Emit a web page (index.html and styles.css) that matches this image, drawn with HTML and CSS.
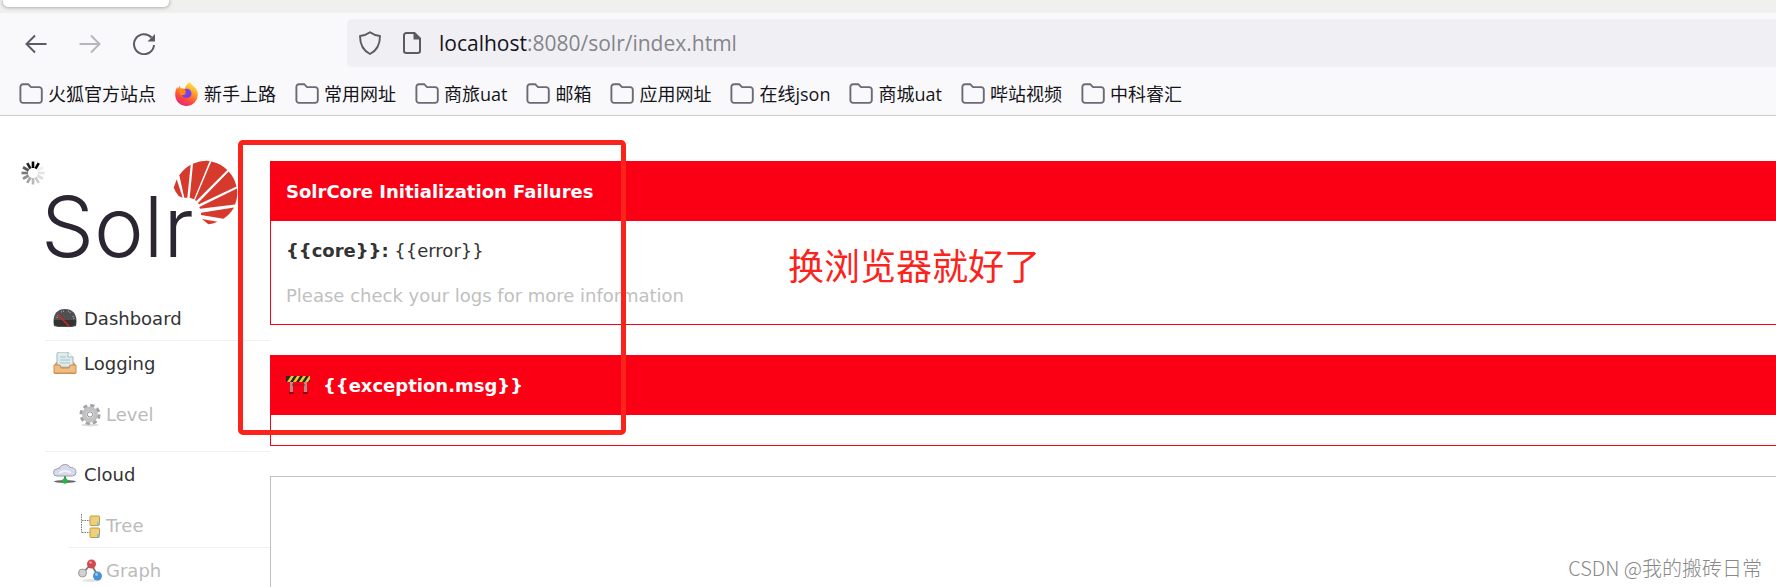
FILE: index.html
```html
<!DOCTYPE html>
<html lang="zh-CN">
<head>
<meta charset="utf-8">
<title>Solr Admin</title>
<link rel="stylesheet" href="styles.css">
</head>
<body>
<svg class="defs" aria-hidden="true">
  <symbol id="folder" viewBox="0 0 24 24"><path d="M4 2.2h5.2l2.8 2.9h8.2a2.6 2.6 0 0 1 2.6 2.6v10.6a2.6 2.6 0 0 1-2.6 2.6H4a2.6 2.6 0 0 1-2.6-2.6V4.8A2.6 2.6 0 0 1 4 2.2z" fill="none" stroke="#6b6a76" stroke-width="1.9"/></symbol>
</svg>
<header class="browser">
  <div class="tabs"><div class="tab"></div></div>
  <div class="toolbar">
    <div class="buttons">
      <button type="button" aria-label="后退"><svg viewBox="0 0 24 24"><path d="M22.5 13H2.500M11 4.500L2.500 13l8.500 8.500" fill="none" stroke="#5b5b66" stroke-width="2"/></svg></button>
      <button type="button" aria-label="前进" disabled><svg viewBox="0 0 24 24"><path d="M1.500 13h20M13 4.500l8.500 8.500-8.500 8.500" fill="none" stroke="#b6b6bd" stroke-width="2"/></svg></button>
      <button type="button" aria-label="刷新"><svg viewBox="0 0 24 24"><path d="M19.500 6.500A10 10 0 1 0 22 14" fill="none" stroke="#5b5b66" stroke-width="2"/><path d="M23 3v7.500h-7.500z" fill="#5b5b66"/></svg></button>
    </div>
    <div class="address">
      <svg viewBox="0 0 24 24"><path d="M12 1.300c3 2.300 6.200 3.300 10 3.700 0 8-3 14.500-10 18-7-3.500-10-10-10-18 3.800-.4 7-1.400 10-3.700z" fill="none" stroke="#5b5b60" stroke-width="1.900" stroke-linejoin="round"/></svg>
      <svg viewBox="0 0 24 24"><path d="M14.500 2H6.300A2.300 2.300 0 0 0 4 4.300v15.400A2.300 2.300 0 0 0 6.300 22h11.400a2.300 2.300 0 0 0 2.300-2.300V7.500z" fill="none" stroke="#5b5b60" stroke-width="2"/><path d="M13.500 1.500v7h7z" fill="#5b5b60"/></svg>
      <a class="url" href="#"><b>localhost</b>:8080/solr/index.html</a>
    </div>
  </div>
  <nav class="bookmarks" aria-label="书签">
    <a href="#"><svg><use href="#folder"/></svg>火狐官方站点</a>
    <a href="#"><svg viewBox="0 0 24 24">
      <defs><linearGradient id="fox" x1=".8" y1="0" x2=".3" y2="1"><stop offset="0" stop-color="#fff44f"/><stop offset=".35" stop-color="#ffa52a"/><stop offset=".7" stop-color="#ff4b3e"/><stop offset="1" stop-color="#e8207c"/></linearGradient></defs>
      <path d="M15 0c1 2.500 3 3.400 4.800 5.300 2 2 3 4.600 3 7.200A11.300 11.300 0 0 1 .2 13C.1 9.600 1 7 2.200 4.800l.6 2 2-3 .8 2.700c1.500-.6 3-.4 4 .2 1.500-3 2.300-5.500 5.400-6.700z" fill="url(#fox)"/>
      <path d="M8 9c1.500-3 6.500-3.500 8 .5 1.400 3.600-.8 6.500-4.300 6.500-3 0-4.500-1.200-4.900-3.500 1.500.6 3 .3 4.400-1-.9-1.200-2-1.800-3.200-2.500z" fill="#7542e5"/>
      <path d="M4.500 8c2.500-1.500 5-.8 6.800 1.500l-2.500 1.300 1 1.700c-1.800 1-3.500.8-4.800-.2z" fill="#ff8a16"/></svg>新手上路</a>
    <a href="#"><svg><use href="#folder"/></svg>常用网址</a>
    <a href="#"><svg><use href="#folder"/></svg>商旅uat</a>
    <a href="#"><svg><use href="#folder"/></svg>邮箱</a>
    <a href="#"><svg><use href="#folder"/></svg>应用网址</a>
    <a href="#"><svg><use href="#folder"/></svg>在线json</a>
    <a href="#"><svg><use href="#folder"/></svg>商城uat</a>
    <a href="#"><svg><use href="#folder"/></svg>哔站视频</a>
    <a href="#"><svg><use href="#folder"/></svg>中科睿汇</a>
  </nav>
</header>
<div class="page">
  <aside class="sidebar">
    <svg class="spinner" viewBox="-12 -12 24 24" aria-label="Loading"><g stroke-width="2.600" stroke="#000">
      <path d="M0-5v-6.500"/><path d="M0-5v-6.500" transform="rotate(30)"/>
      <path d="M0-5v-6.500" transform="rotate(60)" opacity=".06"/><path d="M0-5v-6.500" transform="rotate(90)" opacity=".1"/>
      <path d="M0-5v-6.500" transform="rotate(120)" opacity=".13"/><path d="M0-5v-6.500" transform="rotate(150)" opacity=".2"/>
      <path d="M0-5v-6.500" transform="rotate(180)" opacity=".27"/><path d="M0-5v-6.500" transform="rotate(210)" opacity=".35"/>
      <path d="M0-5v-6.500" transform="rotate(240)" opacity=".43"/><path d="M0-5v-6.500" transform="rotate(270)" opacity=".52"/>
      <path d="M0-5v-6.500" transform="rotate(300)" opacity=".65"/><path d="M0-5v-6.500" transform="rotate(330)" opacity=".85"/></g></svg>
    <a class="logo" href="#">
      <svg viewBox="0 0 193 104" role="img" aria-label="Solr">
        <g fill="#d53a2d">
          <path d="M131.700 18.300L137.700 36.700 133.700 35A32 32 0 0 1 128.700 26.700z"/>
          <path d="M134.300 14.300A32 32 0 0 1 145.700 3.700L142.300 36.700H139.300z"/>
          <path d="M148 2.700A32 32 0 0 1 164.700 0L149 38.300 144.700 36.700z"/>
          <path d="M166.300 .500A32 32 0 0 1 182.300 9L151.300 40 150 39z"/>
          <path d="M183.700 10.500A32 32 0 0 1 191.500 25.500L154 43.300 153 42z"/>
          <path d="M192 27.500A32 32 0 0 1 190 43.500L155 47.800 154.300 46z"/>
          <path d="M189 46.500A32 32 0 0 1 178.500 57.700L156 54V51.700z"/>
          <path d="M157 58L172.500 60.700Q168 63 163.300 63.300z"/>
        </g>
        <text class="wordmark" x="-4" y="96">Solr</text>
      </svg>
    </a>
    <ul class="menu">
      <li><a href="#"><svg viewBox="0 0 24 24"><path d="M1 19C-1 9 3 2 12 2s13 7 11 17l-4 1H5z" fill="#505052"/><path d="M1 13h22l-.5 5-4 1H5l-3.800-1z" fill="#333"/><path d="M4 11l1-3m3-3l3-1m4 0l3 2m2 3l1 3" stroke="#aaa" stroke-width="1.200" stroke-dasharray="1 1"/><path d="M5 8l11 11" stroke="#d82323" stroke-width="1.600"/></svg>Dashboard</a></li>
      <li><a href="#"><svg viewBox="0 0 24 24"><path d="M3 10h18l2 4v7q0 1-1 1H2q-1 0-1-1v-7z" fill="#d89a5c"/><path d="M4 1.500Q4 0 6 0h9l5 5v10H4z" fill="#dfecee" stroke="#9fb8bd"/><path d="M15 0v5h5" fill="#fff" stroke="#9fb8bd"/><path d="M7 5h6M7 8h10M7 11h10" stroke="#a8c3c6"/><path d="M1 13h6l1 3h8l1-3h6v8H1z" fill="#efbd82" stroke="#c98c4e"/></svg>Logging</a>
        <ul>
          <li><a href="#"><svg viewBox="0 0 24 24"><ellipse cx="12" cy="22" rx="9" ry="1.500" fill="#ddd"/><circle cx="12" cy="11.500" r="8.800" fill="none" stroke="#a2a2a4" stroke-width="3.500" stroke-dasharray="4 2.910"/><circle cx="12" cy="11.500" r="5.800" fill="#fff" stroke="#c2c2c5" stroke-width="4.500"/><circle cx="12" cy="11.500" r="2.700" fill="#fff" stroke="#888"/></svg>Level</a></li>
        </ul></li>
      <li><a href="#"><svg viewBox="0 0 24 24"><ellipse cx="12" cy="18.500" rx="11" ry="1.500" fill="#666"/><path d="M11 13h2v5h-2z" fill="#329944"/><path d="M4 13a3.500 3.500 0 0 1 0-7q1-1 2.500-.7C7 1 15.500 0 17 4.500c4-.5 6 2 6 5q0 3-3.500 3.500z" fill="#d8d9ea" stroke="#9b9cb5"/><path d="M6 10q6-4 12 0" fill="none" stroke="#f3f3fb" stroke-width="2"/><circle cx="12" cy="18" r="2.700" fill="#28b446"/></svg>Cloud</a>
        <ul>
          <li><a href="#"><svg viewBox="0 0 24 24"><path d="M3.500 0v18.500M4 6.500h8M4 18.500h8" stroke="#777" fill="none" stroke-dasharray="1.500 1"/><rect x="12" y="2" width="9.500" height="9.500" rx="1" fill="#ecd07c" stroke="#c39b40"/><rect x="12" y="14" width="9.500" height="9.500" rx="1" fill="#ecd07c" stroke="#c39b40"/><path d="M19 8l3 1v2h-3zM19 20l3 1v2h-3z" fill="#7bc4df"/></svg>Tree</a></li>
          <li><a href="#"><svg viewBox="0 0 24 24"><ellipse cx="13" cy="21.500" rx="9" ry="1.500" fill="#e3e3e3"/><path d="M4.500 14.500L13 5l7 12" stroke="#777" stroke-width="1.800" fill="none"/><circle cx="13.500" cy="5" r="4.500" fill="#d4484d"/><circle cx="4.500" cy="14" r="4" fill="#d2d2d2" stroke="#999"/><circle cx="19.500" cy="17" r="4.500" fill="#4a90d2"/><circle cx="12.500" cy="3.500" r="1.300" fill="#f09a9a"/><circle cx="18.500" cy="15.500" r="1.400" fill="#9cc9ef"/></svg>Graph</a></li>
        </ul></li>
    </ul>
  </aside>
  <main class="main">
    <section class="error">
      <h2>SolrCore Initialization Failures</h2>
      <div class="detail">
        <p><strong>{{core}}:</strong> {{error}}</p>
        <p class="hint">Please check your logs for more information</p>
      </div>
    </section>
    <section class="error">
      <h2><svg viewBox="0 0 24 24"><path d="M4 7h3v12H4zM18 7h3v12h-3z" fill="#b58a8d"/><path d="M3 19h5M17 19h5" stroke="#8b0a12" stroke-width="2"/><path d="M6 11h13" stroke="#a8121c"/><path d="M0 2h24v6H0z" fill="#2c2923"/><path d="M5 2h3L4 8H1zM11 2h3l-4 6H7zM17 2h3l-4 6h-3zM23 2h1v3l-2 3h-3z" fill="#f0c63a"/></svg>{{exception.msg}}</h2>
      <div class="blank"></div>
    </section>
    <section class="content"></section>
  </main>
</div>
<div class="marker"></div>
<p class="note">换浏览器就好了</p>
<p class="watermark">CSDN @我的搬砖日常</p>
</body>
</html>
```
FILE: styles.css
```css
* { box-sizing: border-box; }
html { height: 100%; }
body {
  margin: 0;
  height: 100%;
  display: flex;
  flex-direction: column;
  position: relative;
  background: #fff;
  color: #333;
  font: 18px/24px "DejaVu Sans", Verdana, sans-serif;
}
h2, p, ul { margin: 0; padding: 0; }
ul { list-style: none; }
a { color: inherit; text-decoration: none; }
svg { width: 24px; height: 24px; flex: none; }
.defs { position: absolute; width: 0; height: 0; }

.browser {
  flex: none;
  background: #f9f9fb;
  border-bottom: 1px solid #cccccf;
  color: #15141a;
  font-family: "Open Sans", "Noto Sans CJK SC", sans-serif;
}
.tabs { height: 13px; padding: 0 3px; background: #f0f0ee; overflow: hidden; }
.tab { width: 166px; height: 7px; background: #fff; border-radius: 0 0 5px 5px; box-shadow: 0 0 4px #888; }
.toolbar { display: flex; align-items: center; padding-top: 6px; }
.buttons { display: flex; gap: 30px; width: 347px; padding-left: 24px; }
.buttons button { display: flex; padding: 0; border: 0; background: none; }
.address {
  flex: 1;
  display: flex;
  align-items: center;
  height: 48px;
  padding-left: 11px;
  gap: 18px;
  border-radius: 5px 0 0 5px;
  background: #f0f0f4;
}
.url { font-size: 21px; line-height: 30px; color: #85858b; margin-left: -3px; }
.url b { font-weight: 400; color: #15141a; }
.bookmarks { display: flex; gap: 19px; padding: 14px 19px 8px; line-height: 26px; }
.bookmarks a { display: flex; align-items: center; gap: 5px; white-space: nowrap; }

.page { flex: 1; min-height: 0; display: flex; overflow: hidden; }
.sidebar { width: 270px; flex: none; padding: 45px 0 0 45px; position: relative; }
.spinner { position: absolute; left: 21px; top: 45px; }
.logo { display: block; }
.logo svg { display: block; width: 193px; height: 104px; overflow: visible; }
.wordmark { font: 300 84px Inter, sans-serif; fill: #2b2632; }
.menu { padding-top: 31px; }
.menu a { display: flex; align-items: center; gap: 7px; height: 44px; padding: 2px 0 0 8px; }
.menu li + li { border-top: 1px solid #f0f0f0; }
.menu ul { padding: 7px 0 15px 23px; color: #bbb; }
.menu ul a { gap: 4px; padding-left: 10px; }

.main { flex: 1; min-width: 0; padding-top: 45px; display: flex; flex-direction: column; gap: 30px; }
.error { border: 1px solid #fb0015; border-width: 0 0 1px 1px; }
.error h2 {
  display: flex;
  align-items: center;
  gap: 13px;
  height: 60px;
  padding: 2px 0 0 15px;
  background: #fb0015;
  color: #fff;
  font: 700 18px/24px "DejaVu Sans", Verdana, sans-serif;
}
.detail { display: grid; gap: 21px; padding: 18px 15px 16px; }
.hint { color: #c0c0c0; }
.blank { height: 30px; }
.content { flex: 1; border: 1px solid #c0c0c0; border-width: 1px 0 0 1px; }

.marker { position: absolute; left: 238px; top: 140px; width: 388px; height: 295px; border: 5px solid #fa241d; border-radius: 5px; }
.note { position: absolute; left: 788px; top: 238px; color: #fa241d; font: 36px/52px "Noto Sans CJK SC", sans-serif; }
.watermark { position: absolute; right: 14px; bottom: 4px; color: #888; font: 300 20px/30px "Noto Sans CJK SC", sans-serif; }
```
